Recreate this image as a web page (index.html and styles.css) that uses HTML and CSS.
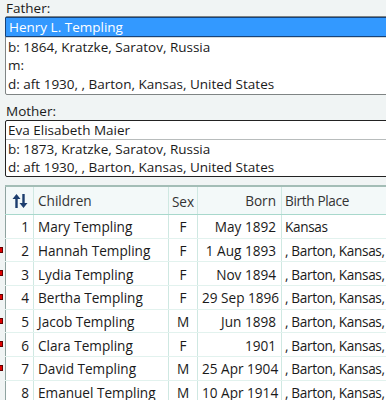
FILE: index.html
```html
<!DOCTYPE html>
<html>
<head>
<meta charset="utf-8">
<link rel="stylesheet" href="styles.css">
</head>
<body>
<div class="page">
  <div class="label">Father:</div>
  <div class="box father">
    <div class="row sel">Henry L. Templing</div>
    <div class="row">b: 1864, Kratzke, Saratov, Russia</div>
    <div class="row">m:</div>
    <div class="row">d: aft 1930, , Barton, Kansas, United States</div>
  </div>
  <div class="label mother-label">Mother:</div>
  <div class="box mother">
    <div class="row name">Eva Elisabeth Maier</div>
    <div class="row">b: 1873, Kratzke, Saratov, Russia</div>
    <div class="row">d: aft 1930, , Barton, Kansas, United States</div>
  </div>
  <div class="grid-wrap">
    <div class="markers">
      <span></span><span class="m"></span><span class="m"></span><span class="m"></span><span class="m"></span><span class="m"></span><span class="m"></span><span></span>
    </div>
    <table class="grid">
      <colgroup>
        <col class="w-idx"><col class="w-name"><col class="w-sex"><col class="w-born"><col class="w-place">
      </colgroup>
      <thead>
        <tr>
          <th class="c-idx"><svg width="16" height="16" viewBox="0 0 16 16"><path d="M4.5 1 L0.5 6 H3.3 V15 H5.7 V6 H8.5 Z" fill="#1c3d6e"/><path d="M11.5 15 L7.5 10 H10.3 V1 H12.7 V10 H15.5 Z" fill="#1c3d6e"/></svg></th>
          <th class="c-name">Children</th>
          <th class="c-sex">Sex</th>
          <th class="c-born">Born</th>
          <th class="c-place">Birth Place</th>
        </tr>
      </thead>
      <tbody>
        <tr><td class="c-idx">1</td><td class="c-name">Mary Templing</td><td class="c-sex">F</td><td class="c-born">May 1892</td><td class="c-place">Kansas</td></tr>
        <tr><td class="c-idx">2</td><td class="c-name">Hannah Templing</td><td class="c-sex">F</td><td class="c-born">1 Aug 1893</td><td class="c-place">, Barton, Kansas,</td></tr>
        <tr><td class="c-idx">3</td><td class="c-name">Lydia Templing</td><td class="c-sex">F</td><td class="c-born">Nov 1894</td><td class="c-place">, Barton, Kansas,</td></tr>
        <tr><td class="c-idx">4</td><td class="c-name">Bertha Templing</td><td class="c-sex">F</td><td class="c-born">29 Sep 1896</td><td class="c-place">, Barton, Kansas,</td></tr>
        <tr><td class="c-idx">5</td><td class="c-name">Jacob Templing</td><td class="c-sex">M</td><td class="c-born">Jun 1898</td><td class="c-place">, Barton, Kansas,</td></tr>
        <tr><td class="c-idx">6</td><td class="c-name">Clara Templing</td><td class="c-sex">F</td><td class="c-born">1901</td><td class="c-place">, Barton, Kansas,</td></tr>
        <tr><td class="c-idx">7</td><td class="c-name">David Templing</td><td class="c-sex">M</td><td class="c-born">25 Apr 1904</td><td class="c-place">, Barton, Kansas,</td></tr>
        <tr><td class="c-idx">8</td><td class="c-name">Emanuel Templing</td><td class="c-sex">M</td><td class="c-born">10 Apr 1914</td><td class="c-place">, Barton, Kansas,</td></tr>
      </tbody>
    </table>
  </div>
</div>
</body>
</html>
```
FILE: styles.css
```css
html, body {
  margin: 0;
  padding: 0;
  background: #f0f4f4;
  overflow: hidden;
}
.page {
  width: 386px;
  height: 400px;
  overflow: hidden;
  font-family: "Open Sans", "Noto Sans", sans-serif;
  font-size: 13.5px;
  color: #1a1a1a;
}
.label {
  padding: 0 0 0 6px;
  height: 16px;
  line-height: 16px;
}
.mother-label {
  margin-top: 8px;
  height: 17px;
  line-height: 17px;
}
.box {
  margin-left: 5px;
  width: 420px;
  background: #fff;
  border: 1px solid #7f8484;
  border-radius: 2px;
}
.row {
  height: 19px;
  line-height: 19px;
  padding-left: 2px;
  white-space: nowrap;
}
.father .row.sel {
  background: #3399ff;
  color: #fff;
  border: 1px solid #17437a;
  margin: 0 -1px;
  height: 18px;
  line-height: 18px;
  padding-left: 3px;
  border-radius: 1px;
}
.father .row.sel + .row {
  border-top: 1px solid #d6dada;
  height: 18px;
}
.mother {
  border-color: #222;
}
.mother .name {
  border-bottom: 1px solid #b8bcbc;
  height: 18px;
}
.mother .row:not(.name) {
  height: 18px;
  line-height: 18px;
}
.grid-wrap {
  margin-top: 8px;
  display: flex;
}
.markers {
  width: 5px;
  flex: none;
  padding-top: 29px;
  display: flex;
  flex-direction: column;
}
.markers span {
  height: 23.7px;
  display: flex;
  align-items: center;
}
.markers span.m::before {
  content: "";
  width: 2px;
  height: 4px;
  background: #e00000;
  border: 1px solid #600000;
  border-left: none;
}
.grid {
  table-layout: fixed;
  width: 420px;
  flex: none;
  border-collapse: collapse;
  font-size: 13.6px;
  background: #fff;
  border-left: 1px solid #8fa3a0;
  border-top: 2px solid #a3bdb6;
}
.w-idx { width: 28px; }
.w-name { width: 135px; }
.w-sex { width: 29px; }
.w-born { width: 84px; }
.w-place { width: 144px; }
.grid th {
  background: #f3f9f9;
  font-weight: normal;
  height: 26px;
  color: #333;
  border-bottom: 1px solid #a8d8cc;
  border-right: 1px solid #cfe8e2;
  text-align: left;
  padding: 0 4px;
  white-space: nowrap;
  overflow: hidden;
}
.grid td {
  height: 21.7px;
  padding: 1px 4px 0;
  border-right: 1px solid #cfe8e2;
  border-bottom: 1px solid #e2f2ee;
  white-space: nowrap;
  overflow: hidden;
  color: #1a1a1a;
}
.grid .c-idx { text-align: right; padding: 1px 4px 0 0; }
.grid th.c-idx { text-align: center; padding: 0; vertical-align: middle; }
.grid th.c-idx svg { display: block; margin: 0 auto; }
.grid .c-sex { text-align: center; padding: 1px 0 0; }
.grid .c-born { text-align: right; padding-right: 5px; }
.grid .c-place { padding-left: 3px; letter-spacing: -0.35px; }
```
